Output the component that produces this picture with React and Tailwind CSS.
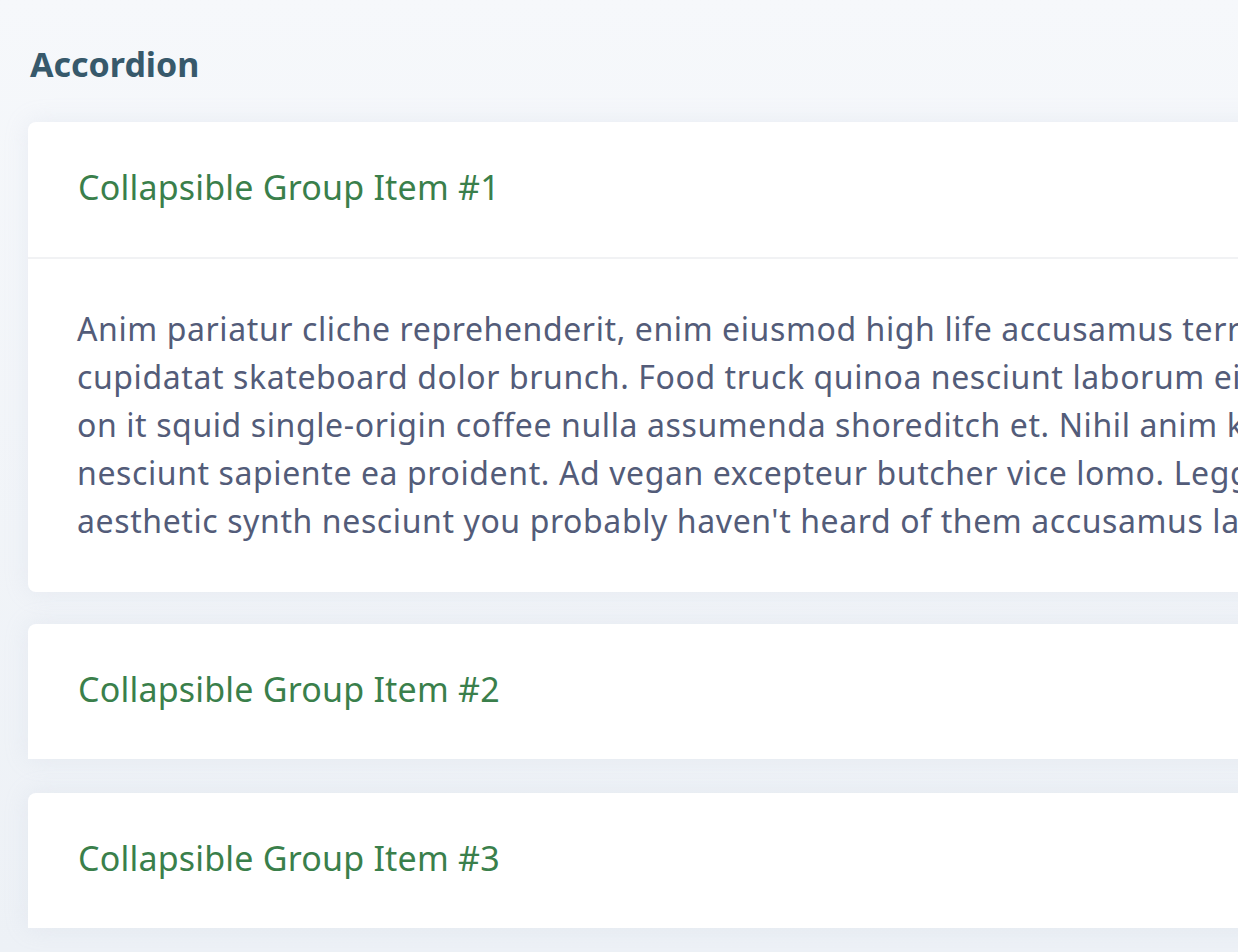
import React from "react";

const lines = [
  "Anim pariatur cliche reprehenderit, enim eiusmod high life accusamus terry richardson ad squid. 3 wolf moon officia aute, non",
  "cupidatat skateboard dolor brunch. Food truck quinoa nesciunt laborum eiusmod. Brunch 3 wolf moon tempor, sunt aliqua put a bird",
  "on it squid single-origin coffee nulla assumenda shoreditch et. Nihil anim keffiyeh helvetica, craft beer labore wes anderson cred",
  "nesciunt sapiente ea proident. Ad vegan excepteur butcher vice lomo. Leggings occaecat craft beer farm-to-table, raw denim",
  "aesthetic synth nesciunt you probably haven't heard of them accusamus labore sustainable VHS.",
];

function Item({ title, open }) {
  return (
    <div
      className={
        "w-[2600px] bg-white shadow-[0_0_24px_rgba(180,190,210,0.18)] " +
        (open ? "rounded-lg" : "rounded-t-lg")
      }
    >
      <div className="h-[135px] flex items-center pl-[50px] pb-[5px]">
        <h2 className="text-[34px] tracking-[0.2px] text-[#3a7f4b] font-normal leading-none">
          {title}
        </h2>
      </div>
      {open && (
        <div className="border-t-2 border-[#f1f2f4] pl-[49px] pt-[46px] pb-[47px]">
          {lines.map((line, i) => (
            <p
              key={i}
              className="whitespace-nowrap text-[32px] tracking-[0.6px] leading-[48px] text-[#535c79]"
            >
              {line}
            </p>
          ))}
        </div>
      )}
    </div>
  );
}

export default function App() {
  return (
    <div
      className="w-screen min-h-screen overflow-hidden bg-gradient-to-b from-[#f6f8fb] to-[#edf1f6]"
      style={{ fontFamily: '"Noto Sans", "Open Sans", sans-serif' }}
    >
      <div className="pl-7 pt-[47px]">
        <h1 className="pl-[2px] text-[34px] font-bold leading-none text-[#37596b]">
          Accordion
        </h1>
        <div className="mt-[41px] flex flex-col">
          <Item title="Collapsible Group Item #1" open />
          <div className="h-8" />
          <Item title="Collapsible Group Item #2" />
          <div className="h-[34px]" />
          <Item title="Collapsible Group Item #3" />
        </div>
      </div>
    </div>
  );
}
